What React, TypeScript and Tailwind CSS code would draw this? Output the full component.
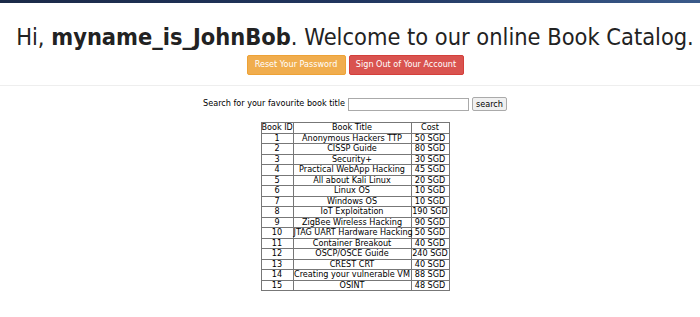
import React from "react";

const books = [
  { id: 1, title: "Anonymous Hackers TTP", cost: "50 SGD" },
  { id: 2, title: "CISSP Guide", cost: "80 SGD" },
  { id: 3, title: "Security+", cost: "30 SGD" },
  { id: 4, title: "Practical WebApp Hacking", cost: "45 SGD" },
  { id: 5, title: "All about Kali Linux", cost: "20 SGD" },
  { id: 6, title: "Linux OS", cost: "10 SGD" },
  { id: 7, title: "Windows OS", cost: "10 SGD" },
  { id: 8, title: "IoT Exploitation", cost: "190 SGD" },
  { id: 9, title: "ZigBee Wireless Hacking", cost: "90 SGD" },
  { id: 10, title: "JTAG UART Hardware Hacking", cost: "50 SGD" },
  { id: 11, title: "Container Breakout", cost: "40 SGD" },
  { id: 12, title: "OSCP/OSCE Guide", cost: "240 SGD" },
  { id: 13, title: "CREST CRT", cost: "40 SGD" },
  { id: 14, title: "Creating your vulnerable VM", cost: "88 SGD" },
  { id: 15, title: "OSINT", cost: "48 SGD" },
];

const App = () => {
  return (
    <div className="w-[700px] h-[317px] bg-white overflow-hidden font-['DejaVu_Sans_Condensed','DejaVu_Sans',sans-serif] font-stretch-condensed text-[#222]">
      <div className="h-[3px] bg-gradient-to-r from-[#1b2a48] via-[#20355e] to-[#3a5a8a]" />
      <div className="flex flex-col items-center pl-[10px]">
        <h1 className="mt-[21px] text-[23.4px] leading-[27px] whitespace-nowrap">
          Hi, <b>myname_is_JohnBob</b>. Welcome to our online Book Catalog.
        </h1>
        <div className="mt-[4px] flex gap-[3px]">
          <button className="h-[20px] w-[99px] rounded-[2px] border border-[#eea236] bg-[#f0ad4e] text-white text-[9px]">
            Reset Your Password
          </button>
          <button className="h-[20px] w-[115px] rounded-[2px] border border-[#d43f3a] bg-[#d9534f] text-white text-[9px]">
            Sign Out of Your Account
          </button>
        </div>
      </div>
      <div className="mt-[10px] border-t border-[#eeeeee]" />
      <div className="mt-[11px] pl-[10px] flex items-center justify-center gap-[3px] text-[9px] text-black">
        <span>Search for your favourite book title</span>
        <input className="h-[13px] w-[121px] border border-[#aaa] bg-white" />
        <button className="h-[14px] px-[3px] border border-[#aaa] rounded-[2px] bg-[#f0f0f0] text-[9px]">
          search
        </button>
      </div>
      <div className="mt-[11px] pl-[10px] flex justify-center">
        <table className="table-fixed w-[188px] border-collapse border border-[#777] text-[9px] leading-[9px] text-black text-center">
          <thead>
            <tr className="h-[10.5px]">
              <td className="w-[32px] border border-[#777] p-0 whitespace-nowrap">Book ID</td>
              <td className="w-[118px] border border-[#777] p-0">Book Title</td>
              <td className="w-[38px] border border-[#777] p-0">Cost</td>
            </tr>
          </thead>
          <tbody>
            {books.map((b) => (
              <tr key={b.id} className="h-[10.5px]">
                <td className="border border-[#777] p-0">{b.id}</td>
                <td className="border border-[#777] p-0 whitespace-nowrap">{b.title}</td>
                <td className="border border-[#777] p-0 whitespace-nowrap">{b.cost}</td>
              </tr>
            ))}
          </tbody>
        </table>
      </div>
    </div>
  );
};

export default App;
